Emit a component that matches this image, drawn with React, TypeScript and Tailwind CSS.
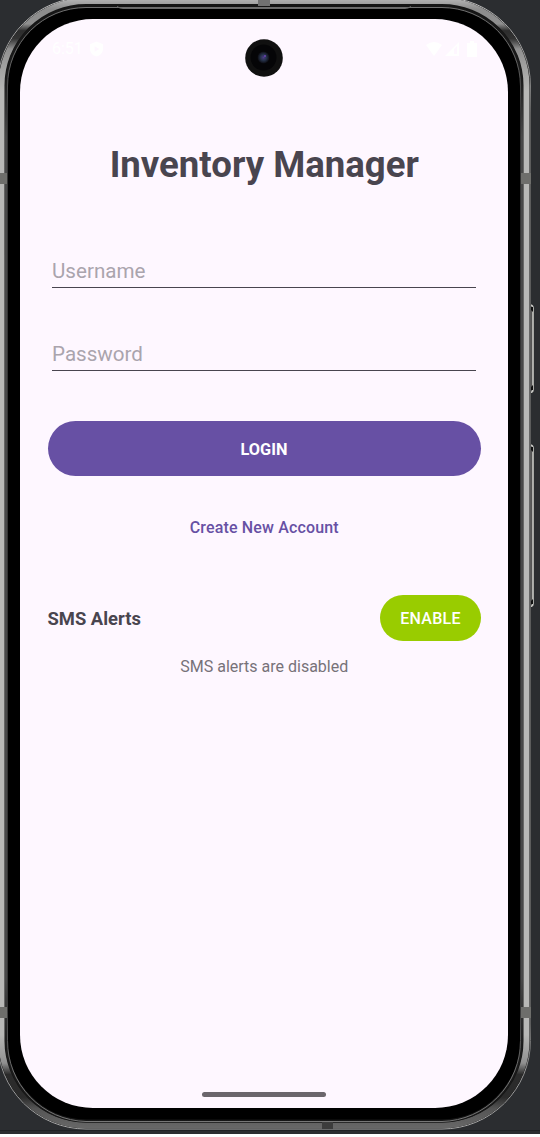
import React from "react";

const outer = "M86 -2.5 H442 A88.5 88.5 0 0 1 530.5 86 V1040.5 A88.5 88.5 0 0 1 442 1129 H86 A88.5 88.5 0 0 1 -2.5 1040.5 V86 A88.5 88.5 0 0 1 86 -2.5 Z";
const middle = "M86 1 H442 A84.5 84.5 0 0 1 526.5 86 V1040.5 A84.5 84.5 0 0 1 442 1125.5 H86 A84.5 84.5 0 0 1 1.5 1040.5 V86 A84.5 84.5 0 0 1 86 1 Z";
const rim = "M86 6.5 H442 A79.5 79.5 0 0 1 521.5 86 V1040.5 A80.5 80.5 0 0 1 442 1121 H86 A80.5 80.5 0 0 1 6.5 1040.5 V86 A79.5 79.5 0 0 1 86 6.5 Z";
const inner = "M86 7.5 H442 A78.5 78.5 0 0 1 520.5 86 V1040.5 A80.5 80.5 0 0 1 442 1121.5 H86 A80.5 80.5 0 0 1 7.5 1040.5 V86 A78.5 78.5 0 0 1 86 7.5 Z";

function PhoneFrame() {
  return (
    <svg className="absolute inset-0 h-[1137px] w-[540px]" viewBox="0 0 540 1137" fill="none" aria-hidden="true">
      <defs>
        <linearGradient id="shade" x1="0" y1="0" x2="0" y2="1137" gradientUnits="userSpaceOnUse">
          <stop offset="0" stopColor="#b0b0b0" />
          <stop offset=".008" stopColor="#8c8c8c" />
          <stop offset=".021" stopColor="#909090" />
          <stop offset=".027" stopColor="#2c2c2c" />
          <stop offset=".034" stopColor="#333" />
          <stop offset=".043" stopColor="#909090" />
          <stop offset=".08" stopColor="#b8b8b6" />
          <stop offset=".91" stopColor="#b8b8b6" />
          <stop offset=".935" stopColor="#909090" />
          <stop offset=".945" stopColor="#2b2b2b" />
          <stop offset=".965" stopColor="#2b2b2b" />
          <stop offset=".975" stopColor="#555" />
          <stop offset="1" stopColor="#707070" />
        </linearGradient>
        <linearGradient id="edge" x1="0" y1="0" x2="0" y2="1137" gradientUnits="userSpaceOnUse">
          <stop offset="0" stopColor="#bbb" />
          <stop offset=".07" stopColor="#888" />
          <stop offset=".1" stopColor="#5c5c5c" />
          <stop offset=".9" stopColor="#5c5c5c" />
          <stop offset=".94" stopColor="#999" />
          <stop offset="1" stopColor="#aaa" />
        </linearGradient>
        <linearGradient id="bezel" x1="0" y1="0" x2="0" y2="1137" gradientUnits="userSpaceOnUse">
          <stop offset="0" stopColor="#707070" />
          <stop offset=".05" stopColor="#666" />
          <stop offset=".1" stopColor="#333" />
          <stop offset=".88" stopColor="#333" />
          <stop offset=".95" stopColor="#777" />
          <stop offset="1" stopColor="#777" />
        </linearGradient>
        <linearGradient id="gasket" x1="0" y1="0" x2="0" y2="1137" gradientUnits="userSpaceOnUse">
          <stop offset="0" stopColor="#151515" />
          <stop offset=".07" stopColor="#1c1c1c" />
          <stop offset=".12" stopColor="#484848" />
          <stop offset=".86" stopColor="#484848" />
          <stop offset=".92" stopColor="#1c1c1c" />
          <stop offset="1" stopColor="#151515" />
        </linearGradient>
        <radialGradient id="lens">
          <stop offset="0" stopColor="#4b3b85" />
          <stop offset=".5" stopColor="#26324a" />
          <stop offset="1" stopColor="#0b0b10" />
        </radialGradient>
      </defs>
      <path d="M0 1130.5H540" stroke="#202124" />
      <rect x="526" y="305" width="7" height="87.5" rx="3" fill="#555" stroke="#c8c8c4" strokeWidth="1.6" />
      <rect x="526" y="445" width="7" height="161.5" rx="3" fill="#555" stroke="#c8c8c4" strokeWidth="1.6" />
      <path d="M531 307h2v5l-2-2zM531 390h2v-5l-2 2zM531 447h2v5l-2-2zM531 604h2v-5l-2 2z" fill="#101010" />
      <path d={outer} fill="#151515" stroke="url(#edge)" strokeWidth="1" />
      <path d={middle} stroke="url(#shade)" strokeWidth="6" />
      <path d={rim} fill="#000" stroke="url(#gasket)" strokeWidth="3" />
      <path d={inner} stroke="url(#bezel)" strokeWidth="1" />
      <path d="M117 6.5q3 2 6 2H405q3 0 6-2" stroke="#6a6a6a" />
      <path d="M0 173h7v11H0zM521 173h10v11h-10zM0 1007h7v11H0zM521 1007h10v11h-10z" fill="#6e6e6b" />
      <path d="M258 0h12v6h-12z" fill="#717171" />
      <path d="M322 1122h11v7h-11z" fill="#3c3c3c" />
    </svg>
  );
}

export default function App() {
  return (
    <div className="relative h-[1137px] w-[540px] overflow-hidden bg-white font-['Roboto',sans-serif]">
      <div className="h-[1134px] bg-[#2b2d30]" />
      <PhoneFrame />
      <main className="absolute left-5 top-[19px] flex h-[1089px] w-[488px] flex-col overflow-hidden rounded-[73px] bg-[#fef7ff]">
        <div className="flex h-[60px] shrink-0 items-center justify-between pl-8 pr-[31px] text-white">
          <div className="flex items-center gap-[7px] text-[16px]">
            <span>6:51</span>
            <svg className="h-4 w-[13px]" viewBox="0 0 14 16"><path fillRule="evenodd" d="M7 0 14 3v5c0 4-3 7-7 8-4-1-7-4-7-8V3zM5 5v6l5-3z" fill="currentColor" /></svg>
          </div>
          <div className="flex items-center gap-[2px]">
            <svg className="h-4 w-4" viewBox="0 0 16 16"><path d="M0 4Q8-2 16 4L8 15Z" fill="currentColor" /></svg>
            <svg className="h-4 w-4" viewBox="0 0 16 16"><path fillRule="evenodd" d="M15 1v14H1zM10 8v5h3V5z" fill="currentColor" /></svg>
            <svg className="ml-[5px] h-4 w-[10px]" viewBox="0 0 10 16"><path d="M3 0h4v2h3v14H0V2h3z" fill="currentColor" /></svg>
          </div>
        </div>
        <div className="flex flex-col pl-[27.5px] pr-[27px] pt-[61px]">
          <h1 className="text-center text-[36.6px] font-bold leading-[50px] text-[#49454f]">Inventory Manager</h1>
          <input aria-label="Username" placeholder="Username" className="ml-[4.5px] mr-[5px] mt-[62px] h-9 border-b border-[#49454f] bg-transparent pt-[3px] text-[20.6px] outline-none placeholder:text-[#aaa4ad]" />
          <input aria-label="Password" type="password" placeholder="Password" className="ml-[4.5px] mr-[5px] mt-[47px] h-9 border-b border-[#49454f] bg-transparent pt-[3px] text-[20.6px] outline-none placeholder:text-[#aaa4ad]" />
          <button className="mt-[50px] h-[55px] w-[433px] rounded-full bg-[#6750a4] pt-[3px] text-[16.3px] font-bold text-white">LOGIN</button>
          <button className="mt-[37px] h-[30px] text-[16px] font-medium tracking-[.15px] text-[#6750a4]">Create New Account</button>
          <div className="mt-[52px] flex w-[433px] items-center justify-between">
            <span className="pt-[2px] text-[18.4px] font-bold leading-[26px] text-[#49454f]">SMS Alerts</span>
            <button className="h-[46px] w-[101px] rounded-full bg-[#99cc00] pl-[1px] pt-[2px] text-[16px] font-medium tracking-[.25px] text-white">ENABLE</button>
          </div>
          <p className="mt-[14px] text-center text-[16px] leading-[24px] text-[#777279]">SMS alerts are disabled</p>
        </div>
        <div className="mx-auto mb-[11px] mt-auto h-[5px] w-[124px] rounded-full bg-[#6b666c]" />
      </main>
      <svg className="absolute left-[245px] top-[39px] h-[38px] w-[38px]" viewBox="0 0 38 38">
        <circle cx="19" cy="19" r="18.8" fill="#101010" />
        <circle cx="18.5" cy="18.5" r="13" fill="#050507" />
        <circle cx="18.5" cy="18.5" r="6" fill="url(#lens)" />
        <circle cx="20" cy="17" r="1" fill="#6a43b5" />
      </svg>
    </div>
  );
}
